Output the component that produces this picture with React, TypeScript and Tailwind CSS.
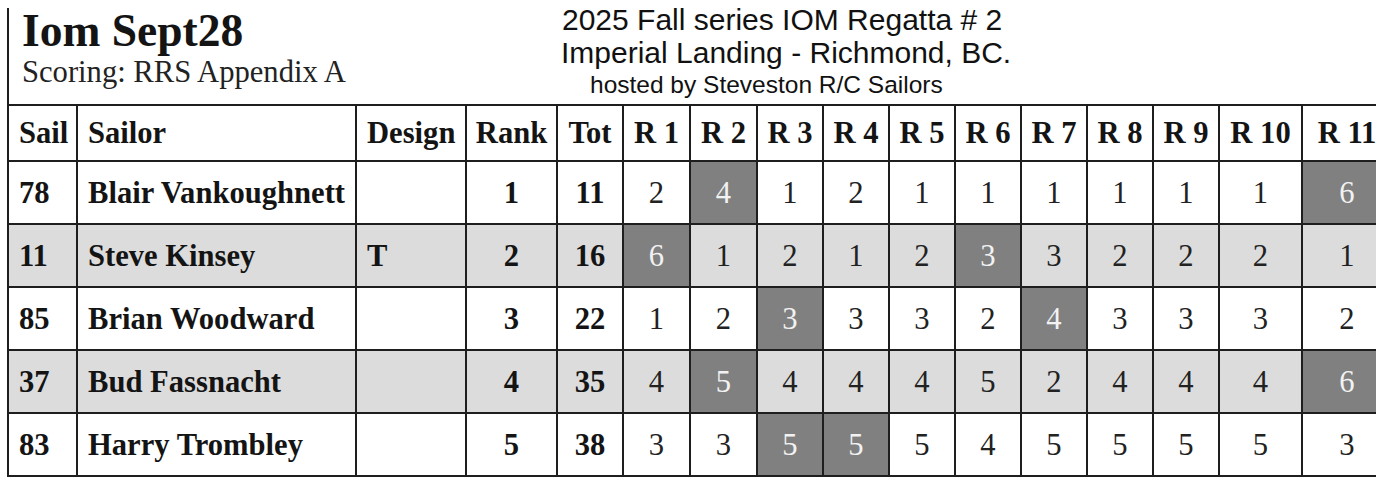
import React from 'react';

type Row = {
    sail: string;
    name: string;
    design: string;
    rank: number;
    tot: number;
    races: number[];
    drops: number[];
};

const rows: Row[] = [
    { sail: '78', name: 'Blair Vankoughnett', design: '', rank: 1, tot: 11, races: [2, 4, 1, 2, 1, 1, 1, 1, 1, 1, 6], drops: [1, 10] },
    { sail: '11', name: 'Steve Kinsey', design: 'T', rank: 2, tot: 16, races: [6, 1, 2, 1, 2, 3, 3, 2, 2, 2, 1], drops: [0, 5] },
    { sail: '85', name: 'Brian Woodward', design: '', rank: 3, tot: 22, races: [1, 2, 3, 3, 3, 2, 4, 3, 3, 3, 2], drops: [2, 6] },
    { sail: '37', name: 'Bud Fassnacht', design: '', rank: 4, tot: 35, races: [4, 5, 4, 4, 4, 5, 2, 4, 4, 4, 6], drops: [1, 10] },
    { sail: '83', name: 'Harry Trombley', design: '', rank: 5, tot: 38, races: [3, 3, 5, 5, 5, 4, 5, 5, 5, 5, 3], drops: [2, 3] },
];

const raceWidths = [67, 67, 66, 66, 66, 66, 66, 66, 66, 83, 90];

const cell = 'border-r-2 border-b-2 border-[#1e1e1e] align-middle';

const App: React.FC = () => {
    return (
        <div className="w-[1388px] h-[494px] bg-white overflow-hidden font-['Liberation_Serif',serif] text-[#141414]">
            <div className="ml-[7px] mt-[8px] w-[1369px] border-l-2 border-[#1e1e1e]">
                {/* Header */}
                <div className="flex h-[96px]">
                    <div className="w-[552px] pl-[13px]">
                        <h1 className="text-[45.5px] leading-[46px] font-bold">Iom Sept28</h1>
                        <p className="mt-[3px] text-[30.6px] leading-[31px] text-[#222]">Scoring: RRS Appendix A</p>
                    </div>
                    <div className="font-['Liberation_Sans',sans-serif] text-[#111] -mt-[5px]">
                        <div className="pl-[1px] text-[30px] leading-[33px]">2025 Fall series IOM Regatta # 2</div>
                        <div className="text-[30px] leading-[33px]">Imperial Landing - Richmond, BC.</div>
                        <div className="pl-[29px] mt-[2px] text-[24.5px] leading-[28px]">hosted by Steveston R/C Sailors</div>
                    </div>
                </div>

                {/* Results table */}
                <div className="overflow-hidden">
                    <table className="table-fixed border-separate border-spacing-0 w-[1384px] text-[30.6px] leading-[34px]">
                        <colgroup>
                            <col className="w-[69px]" />
                            <col className="w-[279px]" />
                            <col className="w-[110px]" />
                            <col className="w-[91px]" />
                            <col className="w-[66px]" />
                            {raceWidths.map((w, i) => (
                                <col key={i} style={{ width: w }} />
                            ))}
                        </colgroup>
                        <thead>
                            <tr className="h-[58px]">
                                <th className={`${cell} border-t-2 text-left pl-[10px] font-bold`}>Sail</th>
                                <th className={`${cell} border-t-2 text-left pl-[10px] font-bold`}>Sailor</th>
                                <th className={`${cell} border-t-2 text-left pl-[10px] font-bold`}>Design</th>
                                <th className={`${cell} border-t-2 text-center font-bold`}>Rank</th>
                                <th className={`${cell} border-t-2 text-center font-bold`}>Tot</th>
                                {raceWidths.map((_, i) => (
                                    <th key={i} className={`${cell} border-t-2 text-center font-bold whitespace-nowrap`}>
                                        R {i + 1}
                                    </th>
                                ))}
                            </tr>
                        </thead>
                        <tbody>
                            {rows.map((r, idx) => {
                                const bg = idx % 2 === 1 ? 'bg-[#dcdcdc]' : 'bg-white';
                                return (
                                    <tr key={r.sail} className={`h-[63px] ${bg}`}>
                                        <td className={`${cell} pl-[10px] font-bold`}>{r.sail}</td>
                                        <td className={`${cell} pl-[10px] font-bold whitespace-nowrap`}>{r.name}</td>
                                        <td className={`${cell} pl-[10px] font-bold`}>{r.design}</td>
                                        <td className={`${cell} text-center font-bold`}>{r.rank}</td>
                                        <td className={`${cell} text-center font-bold`}>{r.tot}</td>
                                        {r.races.map((v, i) => {
                                            const dropped = r.drops.includes(i);
                                            return (
                                                <td
                                                    key={i}
                                                    className={`${cell} text-center ${dropped ? 'bg-[#808080] text-[#f2f2f2]' : 'text-[#222]'}`}
                                                >
                                                    {v}
                                                </td>
                                            );
                                        })}
                                    </tr>
                                );
                            })}
                        </tbody>
                    </table>
                </div>
            </div>
        </div>
    );
};

export default App;
